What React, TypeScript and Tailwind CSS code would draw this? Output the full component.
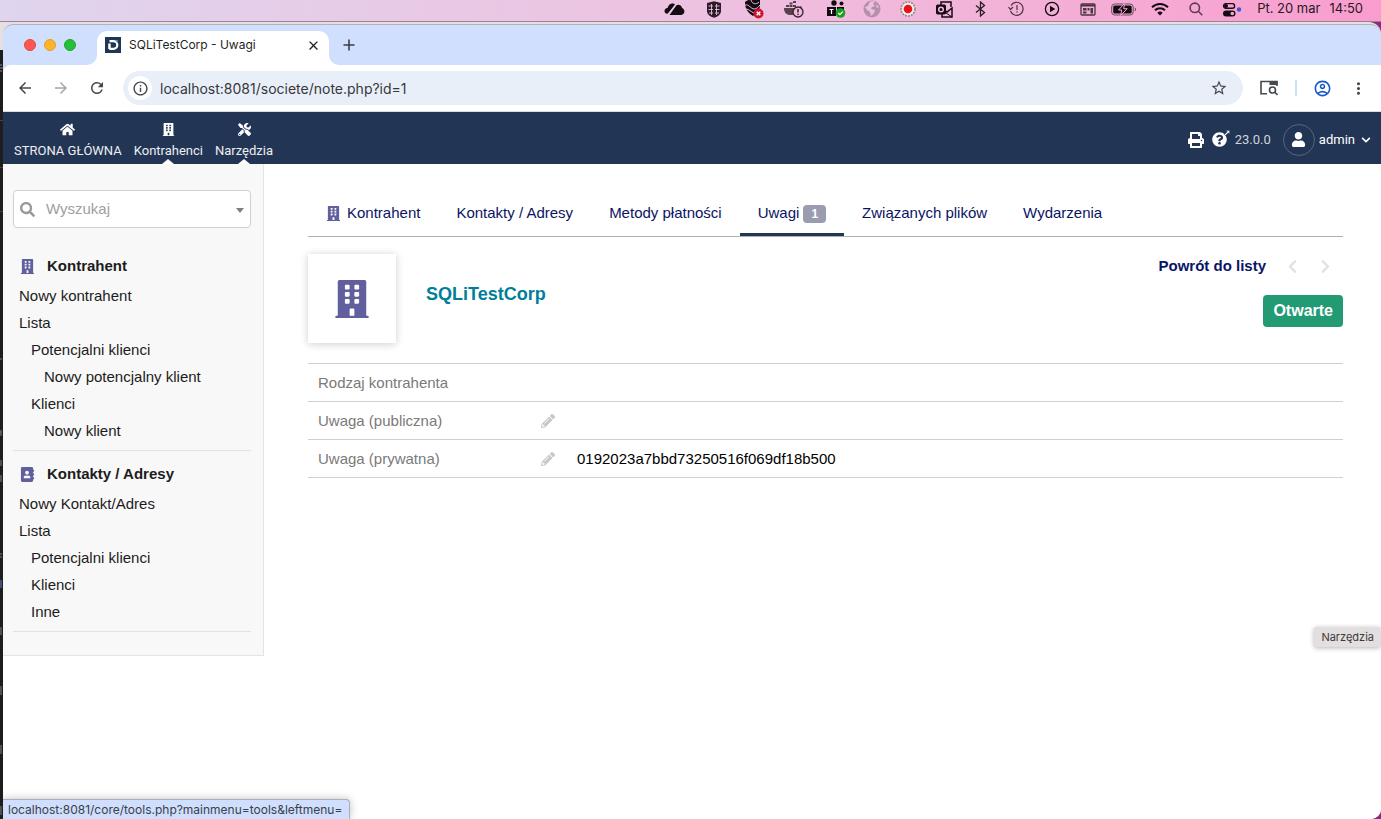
import type { ReactNode } from 'react';
import {
	FaAddressBook,
	FaBuilding,
	FaChevronDown,
	FaChevronLeft,
	FaChevronRight,
	FaHome,
	FaPencilAlt,
	FaPrint,
	FaQuestionCircle,
	FaSearch,
	FaTools,
	FaUser
} from 'react-icons/fa';
import {
	MdArrowBack,
	MdArrowForward,
	MdClose,
	MdMoreVert,
	MdOutlineAccountCircle,
	MdOutlineInfo,
	MdRefresh,
	MdStarBorder
} from 'react-icons/md';

interface SideItem {
	label: string;
	level: 0 | 1 | 2;
}

interface SideBlockProps {
	icon: ReactNode;
	title: string;
	items: SideItem[];
}

const INDENTS = ['pl-[6px]', 'pl-[18px]', 'pl-[31px]'];

const thirdpartyItems: SideItem[] = [
	{ label: 'Nowy kontrahent', level: 0 },
	{ label: 'Lista', level: 0 },
	{ label: 'Potencjalni klienci', level: 1 },
	{ label: 'Nowy potencjalny klient', level: 2 },
	{ label: 'Klienci', level: 1 },
	{ label: 'Nowy klient', level: 2 }
];

const contactItems: SideItem[] = [
	{ label: 'Nowy Kontakt/Adres', level: 0 },
	{ label: 'Lista', level: 0 },
	{ label: 'Potencjalni klienci', level: 1 },
	{ label: 'Klienci', level: 1 },
	{ label: 'Inne', level: 1 }
];

const topMenu = [
	{ label: 'STRONA GŁÓWNA', icon: <FaHome size={15} />, selected: false },
	{ label: 'Kontrahenci', icon: <FaBuilding size={13} />, selected: true },
	{ label: 'Narzędzia', icon: <FaTools size={13} />, selected: true }
];

const tabs = [
	{ label: 'Kontrahent', icon: true },
	{ label: 'Kontakty / Adresy' },
	{ label: 'Metody płatności' },
	{ label: 'Uwagi', badge: 1, active: true },
	{ label: 'Związanych plików' },
	{ label: 'Wydarzenia' }
];

const notes = [
	{ label: 'Rodzaj kontrahenta', editable: false, value: '' },
	{ label: 'Uwaga (publiczna)', editable: true, value: '' },
	{ label: 'Uwaga (prywatna)', editable: true, value: '0192023a7bbd73250516f069df18b500' }
];

/* Ikony paska menu, pierwsza grupa */
const leftTrayIcons = [
	<svg key="cloud" width="21" height="14" viewBox="0 0 21 14">
		<path d="M2 11.500C-.6 9.800.4 6.200 3.500 6L8.500 1.600l2 1.500L3.600 11.800z" fill="#140c12" />
		<path d="M5.500 13 12.300 3.500c1.500-1.600 5.200-.6 5.700 2.500 3.400 1.200 3.300 7-1 7H7z" fill="#140c12" />
		<path d="M3.800 5.600C4.500 2 8 .4 11 2L4.500 10z" fill="#140c12" />
		<path d="M4.500 12.500 11.500 3.300" stroke="#e8cbe4" strokeWidth=".8" />
	</svg>,
	<svg key="shield" width="16" height="17" viewBox="0 0 16 17">
		<path d="M1 2 8 .3 15 2v8c0 3.500-3 5.500-7 6.700C4 15.500 1 13.500 1 10z" fill="#2b1d27" />
		<path d="M2.500 5h11M2.500 8.500h11M3 12h10M5.500 3v11M10.500 3v11" stroke="#e8bfdd" strokeWidth=".9" />
		<path d="M8 1v15" stroke="#2b1d27" strokeWidth="2" />
	</svg>,
	<svg key="stripes" width="20" height="20" viewBox="0 0 20 20">
		<path d="M1 3c2-2 5-2.500 7-2.200L16 1v5c0 5-3 8-7 11-5-3-8-7-8-14z" fill="#140c12" />
		<path d="M1 6c4-1 6 4 9 4s4-2 6-4M2 10c3 0 5 3 8 4M7 1c1 4 5 5 8 2" stroke="#e8bfdd" strokeWidth="1" fill="none" />
		<circle cx="14.500" cy="14.500" r="5" fill="#d0122d" />
		<path d="m12.700 12.700 3.600 3.600m0-3.600-3.600 3.600" stroke="#fff" strokeWidth="1.400" />
	</svg>,
	<svg key="docker" width="20" height="18" viewBox="0 0 20 18">
		<path d="M2 5h3v2H2zM5.500 5h3v2h-3zM9 5h3v2H9zM5.500 2.500h3v2h-3zM9 1h3v2H9zM0 8h14c2-.5 2-2 3-2 1.500 1 1 3-2 3.500C13 14 10 15 6 15 2 15 0 12 0 8z" fill="#58404f" />
		<circle cx="14" cy="12" r="5" fill="#edb9dc" stroke="#33222d" strokeWidth="1.300" />
		<path d="M14 9v3.600M14 13.800v1.300" stroke="#33222d" strokeWidth="1.500" />
	</svg>
];

/* Ikony paska menu, druga grupa */
const rightTrayIcons = [
	<svg key="teams" width="20" height="18" viewBox="0 0 20 18">
		<circle cx="8" cy="3" r="2.700" fill="#140c12" />
		<circle cx="15.500" cy="3.500" r="2" fill="#140c12" />
		<path d="M1 7h9v9H1zM11 7h7v5h-7z" fill="#140c12" />
		<path d="M3.500 9.500h4M5.500 9.500v4.500" stroke="#fff" strokeWidth="1.200" />
		<circle cx="14.500" cy="13" r="4.800" fill="#17a019" />
		<path d="m12.300 13 1.600 1.600 2.900-3" stroke="#fff" strokeWidth="1.300" fill="none" />
	</svg>,
	<svg key="globe" width="18" height="18" viewBox="0 0 18 18">
		<circle cx="9" cy="9" r="8.500" fill="#b78fae" />
		<path d="M7 1.500 12 1l-2 3 2 2-3 1-1 2 4 1-1 3-3 3-1-4-3-2-2-3 3-1zM13 4l3 3-2 1z" fill="#edbfdc" />
	</svg>,
	<svg key="record" width="18" height="18" viewBox="0 0 18 18">
		<circle cx="9" cy="9" r="7" fill="#f4eeee" stroke="#8d8a82" strokeWidth="1.600" strokeDasharray="2 1" />
		<circle cx="9" cy="9" r="4.300" fill="#e9131a" />
	</svg>,
	<svg key="outlook" width="17" height="17" viewBox="0 0 17 17" fill="none" stroke="#140c12">
		<path d="M5 4V1h10v5M6 13v3h10V7l-5 4-2-1" strokeWidth="1.500" />
		<path d="m10 12 6 4" />
		<rect x=".5" y="4" width="9" height="9" rx="1" fill="#140c12" />
		<circle cx="5" cy="8.500" r="2.300" stroke="#f1b8da" strokeWidth="1.500" />
	</svg>,
	<svg key="bluetooth" width="11" height="16" viewBox="0 0 11 16" fill="none" stroke="#2b1d27" strokeWidth="1.300">
		<path d="m1 4.500 8.500 7L5.500 15V1l4 3.500L1 11.500" />
	</svg>,
	<svg key="history" width="17" height="16" viewBox="0 0 17 16" fill="none" stroke="#4b3443" strokeWidth="1.200">
		<path d="M3 4.500A6.500 6.500 0 1 1 2.500 10" />
		<path d="m.5 6 2 2.500L5 6M9 4v5M9 10.300v1.200" />
	</svg>,
	<svg key="play" width="16" height="16" viewBox="0 0 16 16">
		<circle cx="8" cy="8" r="6.600" fill="none" stroke="#140c12" strokeWidth="1.300" />
		<path d="M6 4.800v6.400L11.300 8z" fill="#140c12" />
	</svg>,
	<svg key="calendar" width="16" height="13" viewBox="0 0 16 13">
		<rect x="1" y="1" width="14" height="11" rx="1" fill="none" stroke="#4b3443" strokeWidth="1.300" />
		<path d="M1 2.500h14" stroke="#4b3443" strokeWidth="2" />
		<path d="M3 5h3.500v2.500H3zM3 8.500h3.500v2H3zM7.500 5h2v2.500h-2zM10.500 5H13v5.500h-2.500z" fill="#4b3443" />
	</svg>,
	<svg key="battery" width="26" height="13" viewBox="0 0 26 13">
		<rect x=".7" y="1" width="21.500" height="11" rx="3" fill="none" stroke="#6b4a5e" />
		<rect x="2.200" y="2.500" width="18.500" height="8" rx="1.500" fill="#140c12" />
		<path d="M23.800 4.500v4c1.600-.6 1.600-3.400 0-4z" fill="#6b4a5e" />
		<path d="M13.500.5 7.500 7h3.200l-1 5.500 6.500-6.800h-3.500z" fill="#140c12" stroke="#f5a8d4" />
	</svg>,
	<svg key="wifi" width="18" height="14" viewBox="0 0 18 14" fill="none" stroke="#140c12" strokeWidth="2">
		<path d="M1 5.200a11.500 11.500 0 0 1 16 0M4 8.300a7.200 7.200 0 0 1 10 0" />
		<path d="M6.300 10.700a3.900 3.900 0 0 1 5.400 0L9 13.500z" fill="#140c12" stroke="none" />
	</svg>,
	<svg key="search" width="14" height="14" viewBox="0 0 14 14" fill="none" stroke="#5e3d50" strokeWidth="1.600">
		<circle cx="5.800" cy="5.800" r="4.700" />
		<path d="m9.300 9.300 4 4" />
	</svg>,
	<svg key="control" width="20" height="15" viewBox="0 0 20 15">
		<rect x="1.600" y="1.600" width="11" height="4.600" rx="2.300" fill="none" stroke="#140c12" strokeWidth="1.400" />
		<circle cx="4" cy="3.900" r="2" fill="#140c12" />
		<rect x="1" y="8.500" width="12.500" height="6" rx="3" fill="#140c12" />
		<circle cx="10.300" cy="11.500" r="1.800" fill="#f5a8d4" />
		<circle cx="17" cy="7.500" r="2.200" fill="#4650d8" />
	</svg>
];

const MenuBar = () => (
	<header className="flex h-[22px] items-center justify-end overflow-hidden border-b border-[#a07f9c] bg-linear-to-r from-[#dfd5ee] via-[#edc2e0] to-[#f99dce] pb-[3px] pr-[18px] text-[13px] text-[#2a1822]">
		<div className="mr-1 flex">
			{leftTrayIcons.map((icon) => (
				<span key={icon.key} className="flex w-10 items-center justify-center">{icon}</span>
			))}
		</div>
		<div className="mr-[7px] flex">
			{rightTrayIcons.map((icon) => (
				<span key={icon.key} className="flex w-9 items-center justify-center">{icon}</span>
			))}
		</div>
		<div className="flex gap-[9px] whitespace-nowrap">
			<span>Pt. 20 mar</span>
			<span>14:50</span>
		</div>
	</header>
);

const BrowserTabs = () => (
	<div className="flex h-10 items-center pl-[21px]">
		<div className="flex gap-2">
			<span className="size-3 rounded-full border border-[#e2463f] bg-[#ff5750]" />
			<span className="size-3 rounded-full border border-[#e1a128] bg-[#feb429]" />
			<span className="size-3 rounded-full border border-[#1ba62c] bg-[#24c138]" />
		</div>
		<div className="relative ml-[21px] flex h-[34px] w-[232px] items-center self-end rounded-t-[10px] bg-white px-2 pb-[6px]">
			{/* zaokrąglenia u podstawy karty */}
			<svg className="absolute bottom-0 -left-[10px]" width="10" height="10" viewBox="0 0 10 10">
				<path d="M10 0v10H0A10 10 0 0 0 10 0z" fill="#fff" />
			</svg>
			<svg className="absolute -right-[10px] bottom-0" width="10" height="10" viewBox="0 0 10 10">
				<path d="M0 0v10h10A10 10 0 0 1 0 0z" fill="#fff" />
			</svg>
			<svg width="16" height="16" viewBox="0 0 16 16">
				<path d="M0 0h16v16H0z" fill="#233554" />
				<path d="M4.500 4.200h4a3.800 3.800 0 0 1 0 7.600H4.300" fill="none" stroke="#fff" strokeWidth="2.200" />
				<path d="M3.200 6.500h2.500V12H3.200z" fill="#fff" />
				<path d="M10 3h2.800v3.500z" fill="#3fa7bd" />
			</svg>
			<span className="ml-2 flex-1 text-[12px] text-[#1f1f1f]">SQLiTestCorp - Uwagi</span>
			<button aria-label="Zamknij kartę">
				<MdClose size={15} color="#1f1f1f" />
			</button>
		</div>
		<button className="ml-[14px]" aria-label="Nowa karta">
			<svg width="12" height="12" viewBox="0 0 12 12" stroke="#3b3f46" strokeWidth="1.600">
				<path d="M6 .5v11M.5 6h11" />
			</svg>
		</button>
	</div>
);

const Toolbar = () => (
	<div className="flex h-[47px] items-center rounded-tl-lg border-b border-[#d7dce0] bg-white pl-[13px] pr-[13px] text-[#45484c]">
		<button aria-label="Wstecz"><MdArrowBack size={18} /></button>
		<button className="ml-[18px] text-[#a5a7a9]" aria-label="Dalej"><MdArrowForward size={18} /></button>
		<button className="ml-[18px]" aria-label="Odśwież"><MdRefresh size={18} /></button>
		<div className="ml-[17px] flex h-[34px] flex-1 items-center rounded-full bg-[#e9eff9] pl-[5px] pr-[15px]">
			<span className="flex size-6 items-center justify-center rounded-full bg-white">
				<MdOutlineInfo size={17} />
			</span>
			<input
				className="ml-2 min-w-0 flex-1 bg-transparent text-[14px] text-[#35373a] outline-none"
				aria-label="Adres"
				defaultValue="localhost:8081/societe/note.php?id=1"
			/>
			<button aria-label="Dodaj do zakładek"><MdStarBorder size={18} /></button>
		</div>
		<button className="ml-[17px]" aria-label="Szukaj w kartach">
			<svg width="18" height="16" viewBox="0 0 18 16" fill="none" stroke="#45484c" strokeWidth="1.600">
				<path d="M7 13.800H1V1.500h16V6" />
				<path d="M9.500 1h8v4h-8z" fill="#45484c" stroke="none" />
				<circle cx="12.500" cy="10" r="3" />
				<path d="m14.700 12.200 2.800 2.800" />
			</svg>
		</button>
		<span className="ml-[17px] h-4 w-[2px] bg-[#cfdffb]" />
		<button className="ml-[16px] text-[#1a57c9]" aria-label="Profil"><MdOutlineAccountCircle size={19} /></button>
		<button className="ml-[17px]" aria-label="Menu przeglądarki"><MdMoreVert size={19} /></button>
	</div>
);

const TopNav = () => (
	<nav className="flex h-[52px] justify-between bg-[#233554] pl-[11px] pr-[10px] font-[Roboto,sans-serif] text-[13px] text-[#eceef2]">
		<div className="flex gap-3">
			{topMenu.map((item) => (
				<a key={item.label} href="#" className="relative flex flex-col items-center pt-[9px]">
					<span className="flex h-4 items-center text-white">{item.icon}</span>
					<span className="mt-1 leading-5">{item.label}</span>
					{item.selected && (
						<svg className="absolute bottom-0" width="12" height="5" viewBox="0 0 12 5">
							<path d="M6 0l6 5H0z" fill="#fff" />
						</svg>
					)}
				</a>
			))}
		</div>
		<div className="flex items-center pt-[3px]">
			<a href="#" aria-label="Drukuj"><FaPrint size={16} color="#fff" /></a>
			<a href="#" aria-label="Pomoc" className="relative ml-2">
				<FaQuestionCircle size={15} color="#fff" />
				<svg className="absolute -top-[2px] -right-[3px]" width="7" height="7" viewBox="0 0 7 7">
					<path d="M3 .5h3.500V4L5.300 2.800 2.500 5.500 1.500 4.500l2.800-2.700z" fill="#fff" stroke="#233554" strokeWidth=".4" />
				</svg>
			</a>
			<span className="ml-2 text-[#cfd4dc]">23.0.0</span>
			<button className="ml-3 flex items-center text-white">
				<span className="flex size-8 items-center justify-center rounded-full border border-[#56637a]">
					<FaUser size={15} />
				</span>
				<span className="ml-1">admin</span>
				<FaChevronDown className="ml-[6px]" size={10} />
			</button>
		</div>
	</nav>
);

const SideBlock = ({ icon, title, items }: SideBlockProps) => (
	<section className="border-b border-[#e2e2e2] pb-[6px]">
		<h2 className="mb-px flex h-[30px] items-center font-bold">
			<span className="flex w-[34px] pl-[7px] text-[#625f9e]">{icon}</span>
			{title}
		</h2>
		<ul>
			{items.map((item) => (
				<li key={item.label} className={`leading-[27px] ${INDENTS[item.level]}`}>
					<a href="#">{item.label}</a>
				</li>
			))}
		</ul>
	</section>
);

const Sidebar = () => (
	<aside className="w-[261px] shrink-0 self-start border-r border-b border-[#e4e4e4] bg-[#f8f8f8] pb-[23px] pl-[10px] pr-[12px] pt-[26px] text-[#1c1c1c]">
		<div className="relative mb-[23px]">
			<FaSearch className="absolute left-[7px] top-[12px]" size={15} color="#999" />
			<select
				aria-label="Wyszukaj"
				className="h-[38px] w-full appearance-none rounded-[4px] border border-[#cfcfcf] bg-white pt-px pl-8 text-[15px] text-[#a0a0a0]"
			>
				<option>Wyszukaj</option>
			</select>
			<svg className="absolute right-[7px] top-[18px]" width="8" height="5" viewBox="0 0 8 5">
				<path d="M0 0h8L4 5z" fill="#808080" />
			</svg>
		</div>
		<SideBlock icon={<FaBuilding size={15} />} title="Kontrahent" items={thirdpartyItems} />
		<div className="pt-2">
			<SideBlock icon={<FaAddressBook size={15} />} title="Kontakty / Adresy" items={contactItems} />
		</div>
	</aside>
);

const NotesCard = () => (
	<main className="min-w-0 flex-1 pl-[44px] pr-[38px] pt-[26px]">
		<nav className="flex border-b border-[#b0b0b0] text-[#0a1464]">
			{tabs.map((tab) => (
				<a
					key={tab.label}
					href="#"
					className={`flex h-[46px] items-center whitespace-nowrap border-y-3 border-t-transparent px-[18px] ${
						tab.active ? 'border-b-[#233554]' : 'border-b-transparent'
					}`}
				>
					{tab.icon && <FaBuilding className="mr-[6px]" size={15} color="#625f9e" />}
					{tab.label}
					{tab.badge && (
						<span className="ml-1 mt-[2px] rounded-[4px] bg-[#9c9cb0] px-2 text-[12px] leading-[18px] font-bold text-white">
							{tab.badge}
						</span>
					)}
				</a>
			))}
		</nav>

		<div className="flex items-start pt-[17px]">
			<div className="flex h-[89px] w-[88px] items-center justify-center bg-white shadow-[0_1px_8px_rgba(0,0,0,0.2)]">
				<FaBuilding size={38} color="#625f9e" />
			</div>
			<h1 className="ml-[30px] mt-7 text-[18px] leading-6 font-bold text-[#007f99]">SQLiTestCorp</h1>
			<div className="ml-auto flex flex-col items-end">
				<div className="flex h-6 items-center">
					<a href="#" className="font-bold text-[#0a1464]">Powrót do listy</a>
					<FaChevronLeft className="ml-[19px]" size={15} color="#e2e2e2" />
					<FaChevronRight className="ml-[18px] mr-[10px]" size={15} color="#e2e2e2" />
				</div>
				<span className="mt-[17px] rounded-[4px] bg-[#229b75] px-[10px] text-[16px] leading-8 font-bold text-white">
					Otwarte
				</span>
			</div>
		</div>

		<table className="mt-5 w-full border-collapse text-left">
			<tbody>
				{notes.map((note) => (
					<tr key={note.label} className="h-[38px] border-y border-[#d0d0d0]">
						<th className="w-[223px] pt-[2px] pl-[10px] font-normal text-[#7a7a7a]">{note.label}</th>
						<td className="w-[46px] pl-[10px]">
							{note.editable && (
								<button className="block" aria-label="Edytuj">
									<FaPencilAlt size={14} color="#c8c8c8" />
								</button>
							)}
						</td>
						<td className="pt-[2px] text-black">{note.value}</td>
					</tr>
				))}
			</tbody>
		</table>
	</main>
);

/* Skrawek okna terminala widoczny przy lewej krawędzi */
const TerminalEdge = () => (
	<div className="w-[3px] shrink-0 overflow-hidden bg-[#1d1d1d]">
		<svg width="3" height="797" viewBox="0 0 3 797">
			<path d="M0 0h3v28H0z" fill="#e4e0e2" />
			<path d="M0 43h2M0 46h3M0 49h2" stroke="#8a8a8a" />
			<path d="M0 98.500h3M0 145.500h3M0 189.500h3" stroke="#444" />
			<path d="M0 337h2M0 410h1M1 408v6M1 438v6M1 453v7M0 532h2M0 535h2M1 605v8M1 664v9M1 723v9M1 784v9" stroke="#858585" />
			<path d="M1 558v8" stroke="#6c83d0" />
		</svg>
	</div>
);

const App = () => (
	<div className="flex min-h-screen flex-col bg-[#8c2a7e] font-[Inter,'Noto_Sans',sans-serif]">
		<MenuBar />
		<div className="flex flex-1 rounded-tr-xl rounded-br-xl bg-[#e4e0e2]">
			<TerminalEdge />
			<div className="relative mt-[2px] flex min-w-0 flex-1 flex-col overflow-hidden rounded-t-[10px] rounded-br-[10px] border-t border-[#b5b2b8] bg-[#cfdffd]">
				<BrowserTabs />
				<Toolbar />
				<TopNav />
				<div className="flex flex-1 bg-white font-['Liberation_Sans',Arial,sans-serif] text-[15px]">
					<Sidebar />
					<NotesCard />
				</div>

				{/* podpowiedź i adres najechanego linku */}
				<div className="absolute right-0 bottom-[172px] rounded-[3px] bg-[#e3dfe0] px-[7px] text-[11px] leading-5 text-[#3d3a3c] shadow-[0_1px_5px_rgba(0,0,0,0.3)]">
					Narzędzia
				</div>
				<div className="absolute bottom-0 left-0 rounded-tr-[4px] border-t border-r border-[#a9b0bd] bg-[#cfdffd] pt-px pr-[7px] pl-[5px] text-[12px] leading-[18px] text-[#3c4049] shadow-[0_0_8px_rgba(0,0,0,0.25)]">
					localhost:8081/core/tools.php?mainmenu=tools&amp;leftmenu=
				</div>
			</div>
		</div>
	</div>
);

export default App;
